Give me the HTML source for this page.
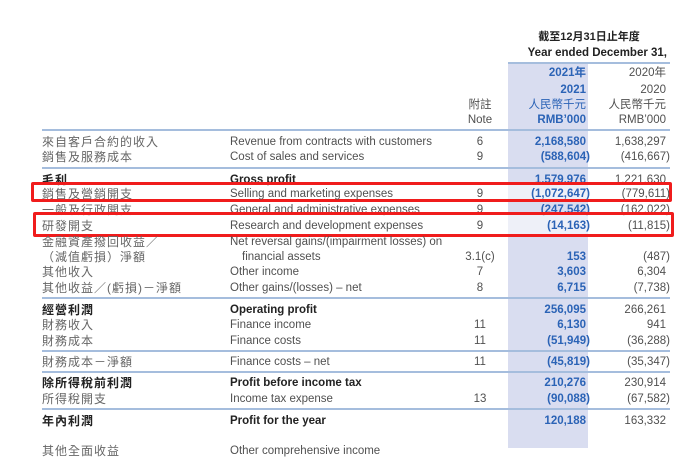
<!DOCTYPE html>
<html><head><meta charset="utf-8"><style>
body{margin:0;width:700px;height:448px;background:#fff;position:relative;overflow:hidden;font-family:"Liberation Sans","Noto Sans CJK TC",sans-serif;font-size:11.5px;color:#555}
.a{position:absolute;white-space:nowrap;line-height:14px}
.zh{left:42px;color:#666;letter-spacing:1px;font-size:12px}
.en{left:230px;color:#505050}
.n{left:460px;width:40px;text-align:center;color:#505050}
.c1{left:500px;width:86px;text-align:right;color:#2b63b6;font-weight:bold}
.c2{left:580px;width:86px;text-align:right;color:#505050}
.b{font-weight:bold;color:#222}
.ln{position:absolute;left:42px;width:628px;height:2px;background:#a5bddd}
.shade{position:absolute;left:508px;width:80px;top:64px;height:384px;background:#d9ddf0}
.box{position:absolute;border:3px solid #f01c1c;border-radius:2px;background:rgba(255,255,255,.55)}
</style></head><body>
<div class="shade"></div>
<div class="a b" style="top:30px;left:519px;width:140px;text-align:center;font-size:11px">截至12月31日止年度</div>
<div class="a b" style="top:46px;left:510px;width:157px;text-align:right">Year ended December 31,</div>
<div style="position:absolute;left:508px;width:162px;top:62px;height:2px;background:#a5bddd"></div>

<div class="a c1" style="top:66px">2021年</div><div class="a c2" style="top:66px">2020年</div>
<div class="a c1" style="top:83px">2021</div><div class="a c2" style="top:83px">2020</div>
<div class="a n" style="top:98px">附註</div><div class="a c1" style="top:98px;font-weight:normal">人民幣千元</div><div class="a c2" style="top:98px">人民幣千元</div>
<div class="a n" style="top:113px">Note</div><div class="a c1" style="top:113px">RMB’000</div><div class="a c2" style="top:113px">RMB’000</div>
<div class="ln" style="top:129px"></div>

<div class="a zh" style="top:135px">來自客戶合約的收入</div><div class="a en" style="top:135px">Revenue from contracts with customers</div><div class="a n" style="top:135px">6</div><div class="a c1" style="top:135px">2,168,580</div><div class="a c2" style="top:135px">1,638,297</div>
<div class="a zh" style="top:150px">銷售及服務成本</div><div class="a en" style="top:150px">Cost of sales and services</div><div class="a n" style="top:150px">9</div><div class="a c1" style="top:150px;left:504px">(588,604)</div><div class="a c2" style="top:150px;left:584px">(416,667)</div>
<div class="ln" style="top:167px"></div>

<div class="a zh b" style="top:173px">毛利</div><div class="a en b" style="top:173px">Gross profit</div><div class="a c1" style="top:173px">1,579,976</div><div class="a c2" style="top:173px">1,221,630</div>
<div class="a zh" style="top:203px">一般及行政開支</div><div class="a en" style="top:203px">General and administrative expenses</div><div class="a n" style="top:203px">9</div><div class="a c1" style="top:203px;left:504px">(247,542)</div><div class="a c2" style="top:203px;left:584px">(162,022)</div>

<div class="box" style="left:31px;top:182px;width:635px;height:14px"></div>
<div class="box" style="left:33px;top:212px;width:635px;height:19px"></div>

<div class="a zh" style="top:187px">銷售及營銷開支</div><div class="a en" style="top:187px">Selling and marketing expenses</div><div class="a n" style="top:187px">9</div><div class="a c1" style="top:187px;left:504px">(1,072,647)</div><div class="a c2" style="top:187px;left:584px">(779,611)</div>
<div class="a zh" style="top:219px">研發開支</div><div class="a en" style="top:219px">Research and development expenses</div><div class="a n" style="top:219px">9</div><div class="a c1" style="top:219px;left:504px">(14,163)</div><div class="a c2" style="top:219px;left:584px">(11,815)</div>

<div class="a zh" style="top:235px">金融資產撥回收益／</div><div class="a en" style="top:235px">Net reversal gains/(impairment losses) on</div>
<div class="a zh" style="top:250px">（減值虧損）淨額</div><div class="a en" style="top:250px;left:242px">financial assets</div><div class="a n" style="top:250px">3.1(c)</div><div class="a c1" style="top:250px">153</div><div class="a c2" style="top:250px;left:584px">(487)</div>
<div class="a zh" style="top:265px">其他收入</div><div class="a en" style="top:265px">Other income</div><div class="a n" style="top:265px">7</div><div class="a c1" style="top:265px">3,603</div><div class="a c2" style="top:265px">6,304</div>
<div class="a zh" style="top:281px">其他收益／(虧損)－淨額</div><div class="a en" style="top:281px">Other gains/(losses) – net</div><div class="a n" style="top:281px">8</div><div class="a c1" style="top:281px">6,715</div><div class="a c2" style="top:281px;left:584px">(7,738)</div>
<div class="ln" style="top:297px"></div>

<div class="a zh b" style="top:303px">經營利潤</div><div class="a en b" style="top:303px">Operating profit</div><div class="a c1" style="top:303px">256,095</div><div class="a c2" style="top:303px">266,261</div>
<div class="a zh" style="top:318px">財務收入</div><div class="a en" style="top:318px">Finance income</div><div class="a n" style="top:318px">11</div><div class="a c1" style="top:318px">6,130</div><div class="a c2" style="top:318px">941</div>
<div class="a zh" style="top:334px">財務成本</div><div class="a en" style="top:334px">Finance costs</div><div class="a n" style="top:334px">11</div><div class="a c1" style="top:334px;left:504px">(51,949)</div><div class="a c2" style="top:334px;left:584px">(36,288)</div>
<div class="ln" style="top:350px"></div>
<div class="a zh" style="top:355px">財務成本－淨額</div><div class="a en" style="top:355px">Finance costs – net</div><div class="a n" style="top:355px">11</div><div class="a c1" style="top:355px;left:504px">(45,819)</div><div class="a c2" style="top:355px;left:584px">(35,347)</div>
<div class="ln" style="top:371px"></div>
<div class="a zh b" style="top:376px">除所得稅前利潤</div><div class="a en b" style="top:376px">Profit before income tax</div><div class="a c1" style="top:376px">210,276</div><div class="a c2" style="top:376px">230,914</div>
<div class="a zh" style="top:392px">所得稅開支</div><div class="a en" style="top:392px">Income tax expense</div><div class="a n" style="top:392px">13</div><div class="a c1" style="top:392px;left:504px">(90,088)</div><div class="a c2" style="top:392px;left:584px">(67,582)</div>
<div class="ln" style="top:408px"></div>
<div class="a zh b" style="top:414px">年內利潤</div><div class="a en b" style="top:414px">Profit for the year</div><div class="a c1" style="top:414px">120,188</div><div class="a c2" style="top:414px">163,332</div>
<div class="a zh" style="top:444px">其他全面收益</div><div class="a en" style="top:444px">Other comprehensive income</div>
</body></html>
